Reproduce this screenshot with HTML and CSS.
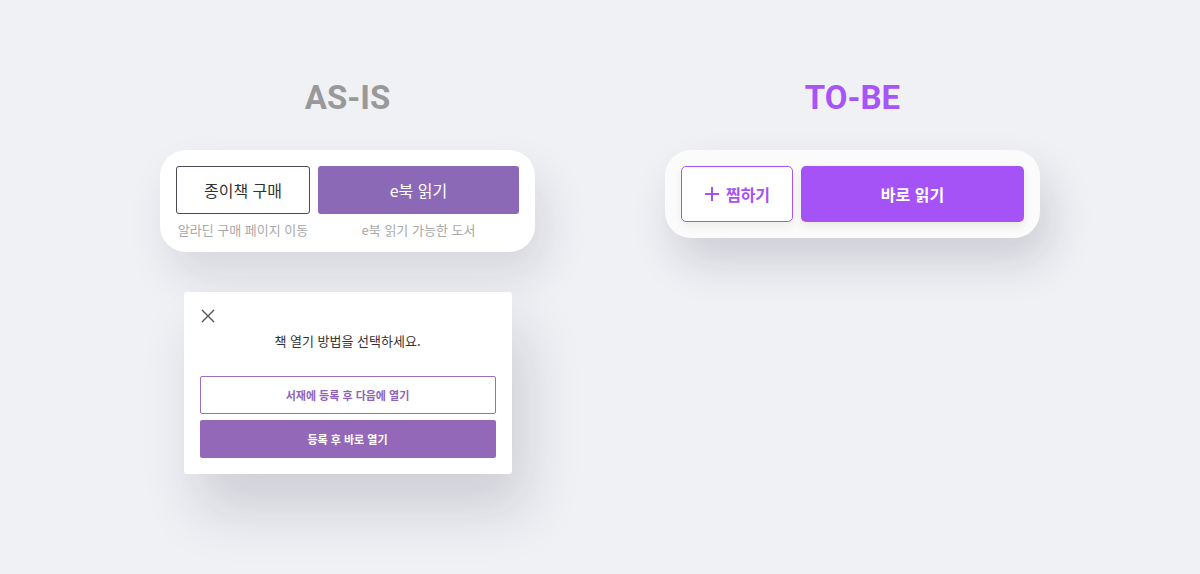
FILE: index.html
```html
<!DOCTYPE html>
<html lang="ko">
<head>
<meta charset="utf-8">
<link rel="stylesheet" href="styles.css">
</head>
<body>
<main class="stage">
  <section class="col">
    <h1 class="title title-asis">AS-IS</h1>
    <div class="card card-asis">
      <div class="opt opt-paper">
        <button class="btn btn-outline-dark">종이책 구매</button>
        <span class="caption">알라딘 구매 페이지 이동</span>
      </div>
      <div class="opt opt-ebook">
        <button class="btn btn-fill-old">e북 읽기</button>
        <span class="caption">e북 읽기 가능한 도서</span>
      </div>
    </div>
    <div class="modal">
      <div class="modal-close">
        <svg width="14" height="14" viewBox="0 0 14 14"><path d="M1 1L13 13M13 1L1 13" stroke="#555" stroke-width="1.4" fill="none"/></svg>
      </div>
      <p class="modal-title">책 열기 방법을 선택하세요.</p>
      <button class="mbtn mbtn-outline">서재에 등록 후 다음에 열기</button>
      <button class="mbtn mbtn-fill">등록 후 바로 열기</button>
    </div>
  </section>
  <section class="col">
    <h1 class="title title-tobe">TO-BE</h1>
    <div class="card card-tobe">
      <button class="btn btn-wish">
        <svg width="16" height="16" viewBox="0 0 16 16"><path d="M8 1V15M1 8H15" stroke="#a552f5" stroke-width="2" fill="none"/></svg>
        <span>찜하기</span>
      </button>
      <button class="btn btn-read">바로 읽기</button>
    </div>
  </section>
</main>
</body>
</html>
```
FILE: styles.css
```css
* { box-sizing: border-box; }
html, body { margin: 0; padding: 0; }
body {
  background: #f0f1f5;
  font-family: "Noto Sans CJK KR", "Noto Sans", sans-serif;
  width: 1200px;
  height: 574px;
  overflow: hidden;
}
.stage {
  display: flex;
  gap: 130px;
  padding-left: 160px;
  padding-top: 78px;
}
.col {
  width: 375px;
  display: flex;
  flex-direction: column;
  align-items: center;
}
.title {
  margin: 0;
  font-family: Roboto, "Noto Sans", sans-serif;
  font-weight: 700;
  font-size: 33px;
  line-height: 40px;
  height: 40px;
  letter-spacing: 0;
}
.title-asis { color: #999999; }
.title-tobe { color: #a855f7; }
.card {
  margin-top: 32px;
  width: 375px;
  border-radius: 26px;
  padding: 16px;
  display: flex;
  gap: 8px;
}
.card-asis {
  background: #fff;
  box-shadow: 10px 24px 44px rgba(30, 30, 50, 0.12);
  padding-bottom: 14px;
}
.card-tobe {
  background: #fbfbfc;
  box-shadow: 10px 24px 44px rgba(30, 30, 50, 0.16);
}
.opt {
  display: flex;
  flex-direction: column;
  align-items: center;
  gap: 8px;
}
.opt-paper { width: 134px; }
.opt-ebook { width: 201px; }
.btn {
  border: none;
  margin: 0;
  padding: 0;
  font-family: "Noto Sans CJK KR", sans-serif;
  display: flex;
  align-items: center;
  justify-content: center;
  cursor: pointer;
}
.btn-outline-dark {
  width: 134px;
  height: 48px;
  background: #fff;
  border: 1px solid #4a4a55;
  border-radius: 3px;
  color: #333;
  font-size: 16px;
  font-weight: 400;
}
.btn-fill-old {
  width: 201px;
  height: 48px;
  background: #8b69b6;
  border-radius: 3px;
  color: #fff;
  font-size: 16px;
  font-weight: 400;
}
.caption {
  font-size: 13px;
  line-height: 16px;
  color: #a8a8a8;
  white-space: nowrap;
}
.btn-wish {
  width: 112px;
  height: 56px;
  background: #fff;
  border: 1px solid #a855f7;
  border-radius: 5px;
  color: #a552f5;
  font-size: 16px;
  font-weight: 700;
  gap: 6px;
  box-shadow: 0 4px 10px rgba(0,0,0,0.06);
}
.btn-read {
  width: 223px;
  height: 56px;
  background: #a552f7;
  border-radius: 5px;
  color: #fff;
  font-size: 16px;
  font-weight: 700;
  box-shadow: 0 4px 10px rgba(0,0,0,0.08);
}
.modal {
  margin-top: 40px;
  width: 328px;
  background: #fff;
  border-radius: 3px;
  padding: 17px 16px 16px;
  box-shadow: 14px 36px 56px rgba(30, 30, 50, 0.16);
  display: flex;
  flex-direction: column;
}
.modal-close {
  width: 14px;
  height: 14px;
  margin-left: 1px;
}
.modal-close svg { display: block; }
.modal-title {
  margin: 8px 0 0;
  text-align: center;
  font-size: 13px;
  line-height: 20px;
  color: #333;
}
.mbtn {
  width: 296px;
  height: 38px;
  border-radius: 2px;
  font-family: "Noto Sans CJK KR", sans-serif;
  font-size: 11px;
  font-weight: 700;
  padding: 0;
  margin: 0;
}
.mbtn-outline {
  margin-top: 25px;
  background: #fff;
  border: 1px solid #9a6cc6;
  color: #8e62bd;
}
.mbtn-fill {
  margin-top: 6px;
  background: #9368b9;
  border: none;
  color: #fff;
}
```
